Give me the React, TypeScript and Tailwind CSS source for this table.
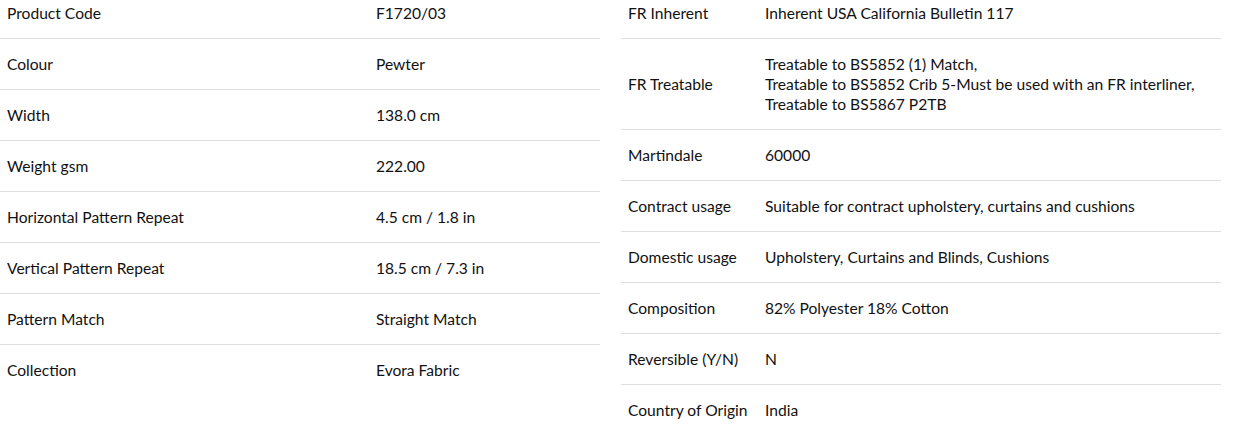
const left: [string, string][] = [
  ["Product Code", "F1720/03"],
  ["Colour", "Pewter"],
  ["Width", "138.0 cm"],
  ["Weight gsm", "222.00"],
  ["Horizontal Pattern Repeat", "4.5 cm / 1.8 in"],
  ["Vertical Pattern Repeat", "18.5 cm / 7.3 in"],
  ["Pattern Match", "Straight Match"],
  ["Collection", "Evora Fabric"],
];

const right: [string, string[]][] = [
  ["FR Inherent", ["Inherent USA California Bulletin 117"]],
  [
    "FR Treatable",
    [
      "Treatable to BS5852 (1) Match,",
      "Treatable to BS5852 Crib 5-Must be used with an FR interliner,",
      "Treatable to BS5867 P2TB",
    ],
  ],
  ["Martindale", ["60000"]],
  ["Contract usage", ["Suitable for contract upholstery, curtains and cushions"]],
  ["Domestic usage", ["Upholstery, Curtains and Blinds, Cushions"]],
  ["Composition", ["82% Polyester 18% Cotton"]],
  ["Reversible (Y/N)", ["N"]],
  ["Country of Origin", ["India"]],
];

export default function App() {
  return (
    <div
      className="flex gap-[21px] bg-white text-[15.6px] leading-5 text-[#111] -mt-3"
      style={{ fontFamily: "Lato, 'Open Sans', sans-serif" }}
    >
      <div className="w-[600px]">
        {left.map(([label, value], i) => (
          <div
            key={label}
            className={`flex items-center py-[15px] ${i < left.length - 1 ? "border-b border-[#dedede]" : ""}`}
          >
            <div className="w-[369px] px-[7px]">{label}</div>
            <div className="flex-1 px-[7px]">{value}</div>
          </div>
        ))}
      </div>
      <div className="w-[600px]">
        {right.map(([label, lines], i) => (
          <div
            key={label}
            className={`flex items-center py-[15px] ${i < right.length - 1 ? "border-b border-[#dedede]" : ""}`}
          >
            <div className="w-[137px] px-[7px]">{label}</div>
            <div className="flex-1 px-[7px]">
              {lines.map((l) => (
                <div key={l}>{l}</div>
              ))}
            </div>
          </div>
        ))}
      </div>
    </div>
  );
}
